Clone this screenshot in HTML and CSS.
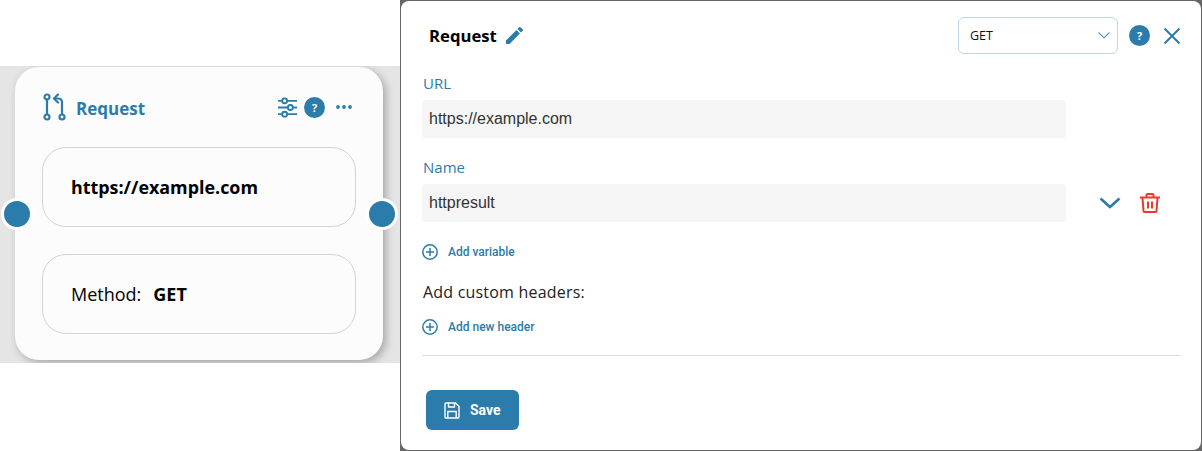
FILE: index.html
```html
<!DOCTYPE html>
<html lang="en">
<head>
    <meta charset="UTF-8">
    <title>Request</title>
    <link rel="stylesheet" href="styles.css">
</head>
<body>
    <div class="canvas">
        <div class="node">
            <span class="handle handle-left"></span>
            <span class="handle handle-right"></span>
            <div class="node-head">
                <svg class="node-icon" width="26" height="30" viewBox="0 0 26 30" fill="none" stroke="#2b7cab" stroke-width="2.2" stroke-linecap="round" stroke-linejoin="round">
                    <circle cx="5" cy="4" r="2.500"/>
                    <circle cx="5" cy="24" r="2.500"/>
                    <path d="M5 6.500v15"/>
                    <circle cx="20" cy="24" r="2.500"/>
                    <path d="M20 21.500V9.500q0-4-4-4h-3.500"/>
                    <path d="M16 1.500l-4 4 4 4"/>
                </svg>
                <span class="node-title">Request</span>
                <div class="node-tools">
                    <svg width="19" height="21" viewBox="0 0 20 22" fill="none" stroke="#2b7cab" stroke-width="2">
                        <path d="M0 4h4M10 4h10M0 11h10M16 11h4M0 18h4M10 18h10"/>
                        <circle cx="7" cy="4" r="2.600"/>
                        <circle cx="13" cy="11" r="2.600"/>
                        <circle cx="7" cy="18" r="2.600"/>
                    </svg>
                    <span class="help">?</span>
                    <svg width="16" height="4" viewBox="0 0 16 4" fill="#2b7cab">
                        <circle cx="2" cy="2" r="1.900"/>
                        <circle cx="8" cy="2" r="1.900"/>
                        <circle cx="14" cy="2" r="1.900"/>
                    </svg>
                </div>
            </div>
            <div class="node-box node-url">https://example.com</div>
            <div class="node-box node-method">Method:<b>GET</b></div>
        </div>
    </div>

    <div class="modal">
        <div class="modal-body">
            <div class="modal-head">
                <span class="modal-title">Request</span>
                <svg class="pencil" width="17" height="17" viewBox="3 3 18 18" fill="#2b7cab">
                    <path d="M3 17.250V21h3.750L17.810 9.940l-3.750-3.750L3 17.250zM20.710 7.040a1 1 0 0 0 0-1.410l-2.340-2.340a1 1 0 0 0-1.410 0l-1.830 1.830 3.750 3.750 1.830-1.830z"/>
                </svg>
                <div class="method-select">
                    <span>GET</span>
                    <svg width="12" height="7" viewBox="0 0 12 7" fill="none" stroke="#5c9cc0" stroke-width="1.200">
                        <path d="M.5 .5L6 6 11.500 .5"/>
                    </svg>
                </div>
                <span class="help">?</span>
                <svg class="close" width="18" height="18" viewBox="0 0 18 18" fill="none" stroke="#2b7cab" stroke-width="2">
                    <path d="M1.500 1.500l15 15M16.500 1.500l-15 15"/>
                </svg>
            </div>

            <div class="field">
                <div class="label">URL</div>
                <div class="input">https://example.com</div>
            </div>

            <div class="field">
                <div class="label">Name</div>
                <div class="field-row">
                    <div class="input">httpresult</div>
                    <svg class="chevron" width="22" height="12" viewBox="0 0 22 12" fill="none" stroke="#2b7cab" stroke-width="2.600">
                        <path d="M1.500 1.500L11 10l9.500-8.500"/>
                    </svg>
                    <svg width="20" height="20" viewBox="0 0 20 20" fill="none" stroke="#f0372e" stroke-width="2">
                        <path d="M0 4.500h20M6.500 4V2q0-1 1-1h5q1 0 1 1v2M2.500 5l1 13q0 1 1 1h11q1 0 1-1l1-13M8 8.500v7M12 8.500v7"/>
                    </svg>
                </div>
            </div>

            <div class="add-link add-variable">
                <svg width="16" height="16" viewBox="0 0 16 16" fill="none" stroke="#2b7cab" stroke-width="1.500">
                    <circle cx="8" cy="8" r="7.200"/>
                    <path d="M8 4v8M4 8h8"/>
                </svg>
                <span>Add variable</span>
            </div>

            <div class="headers-title">Add custom headers:</div>

            <div class="add-link">
                <svg width="16" height="16" viewBox="0 0 16 16" fill="none" stroke="#2b7cab" stroke-width="1.500">
                    <circle cx="8" cy="8" r="7.200"/>
                    <path d="M8 4v8M4 8h8"/>
                </svg>
                <span>Add new header</span>
            </div>

            <div class="divider"></div>

            <div class="save-btn">
                <svg width="16" height="17" viewBox="0 0 16 17" fill="none" stroke="#fff" stroke-width="1.400" stroke-linejoin="round">
                    <path d="M1 2.200q0-1.200 1.200-1.200h9.300L15 4.500v10.300q0 1.200-1.200 1.200H2.200Q1 16 1 14.800z"/>
                    <path d="M4.500 1v4h6V1M3.800 16v-6.500h8.400V16"/>
                </svg>
                <span>Save</span>
            </div>
        </div>
    </div>
</body>
</html>
```

FILE: styles.css
```css
* {
    box-sizing: border-box;
}
body {
    margin: 0;
    height: 451px;
    overflow: hidden;
    display: flex;
    align-items: flex-start;
    background: #fff;
    font-family: "Open Sans", sans-serif;
    color: #111;
}
.canvas {
    width: 400px;
    height: 297px;
    margin-top: 66px;
    padding: 1px 0 0 15px;
    background: #e5e5e5;
    overflow: hidden;
    flex: none;
}
.node {
    position: relative;
    width: 368px;
    height: 293px;
    padding: 0 27px;
    background: #fcfcfc;
    border-radius: 24px;
    box-shadow: 3px 3px 8px rgba(0, 0, 0, 0.28);
}
.handle {
    position: absolute;
    top: 131px;
    width: 32px;
    height: 32px;
    border-radius: 50%;
    background: #2b7cab;
    border: 3px solid #fff;
}
.handle-left {
    left: -14px;
}
.handle-right {
    right: -15px;
}
.node-head {
    display: flex;
    align-items: center;
    height: 80px;
}
.node-icon {
    flex: none;
    margin-top: 2px;
}
.node-title {
    margin: 2px 0 0 8px;
    font-size: 17px;
    font-weight: 700;
    color: #2b7cab;
}
.node-tools {
    margin-left: auto;
    margin-right: 4px;
    display: flex;
    align-items: center;
    gap: 7px;
}
.node-tools svg:last-child {
    margin-left: 4px;
}
.help {
    width: 21px;
    height: 21px;
    border-radius: 50%;
    background: #2b7cab;
    color: #fff;
    font-size: 11px;
    font-weight: 700;
    line-height: 21px;
    text-align: center;
    flex: none;
}
.node-box {
    width: 314px;
    height: 80px;
    display: flex;
    align-items: center;
    padding-left: 28px;
    border: 1px solid #d4d4d4;
    border-radius: 24px;
    color: #000;
}
.node-url {
    font-size: 17.9px;
    font-weight: 700;
}
.node-method {
    margin-top: 27px;
    font-size: 18px;
}
.node-method b {
    margin-left: 12px;
}
.modal {
    width: 802px;
    height: 451px;
    padding: 1px;
    background: #666;
    flex: none;
}
.modal-body {
    height: 100%;
    padding: 0 20px 0 21px;
    background: #fff;
    border-radius: 8px;
}
.modal-head {
    display: flex;
    align-items: center;
    height: 66px;
    padding: 3px 0 0 7px;
}
.modal-title {
    font-size: 16.7px;
    font-weight: 700;
    color: #000;
}
.pencil {
    margin-left: 9px;
}
.method-select {
    margin-left: auto;
    width: 160px;
    height: 37px;
    padding: 0 7px 0 11px;
    display: flex;
    align-items: center;
    justify-content: space-between;
    border: 1px solid #bcd6e6;
    border-radius: 6px;
    font-size: 12.5px;
}
.modal-head .help {
    margin-left: 11px;
}
.close {
    margin: 0 0 0 13px;
}
.field {
    margin-bottom: 13px;
}
.label {
    height: 33px;
    line-height: 33px;
    font-size: 15px;
    color: #2b7cab;
    padding-left: 1px;
}
.input {
    width: 644px;
    height: 38px;
    padding-left: 7px;
    line-height: 37px;
    background: #f5f5f5;
    border-radius: 4px;
    font-family: "Liberation Sans", sans-serif;
    font-size: 16px;
    color: #333;
    flex: none;
}
.field-row {
    display: flex;
    align-items: center;
}
.chevron {
    margin: 0 19px 0 33px;
}
.add-link {
    display: flex;
    align-items: center;
    gap: 10px;
    height: 20px;
    font-family: Roboto, sans-serif;
    font-size: 12px;
    font-weight: 500;
    color: #2b7cab;
}
.add-variable {
    margin-top: 20px;
}
.headers-title {
    margin-top: 20px;
    height: 35px;
    padding-left: 1px;
    font-size: 16px;
    letter-spacing: 0.2px;
    line-height: 20px;
    color: #222;
}
.add-link svg {
    flex: none;
}
.divider {
    margin-top: 18px;
    height: 1px;
    background: #ddd;
}
.save-btn {
    margin: 34px 0 0 4px;
    width: 93px;
    height: 40px;
    display: flex;
    align-items: center;
    gap: 10px;
    padding-left: 18px;
    background: #2b7cab;
    border-radius: 6px;
    color: #fff;
    font-family: Roboto, sans-serif;
    font-size: 14px;
    font-weight: 700;
}
```
